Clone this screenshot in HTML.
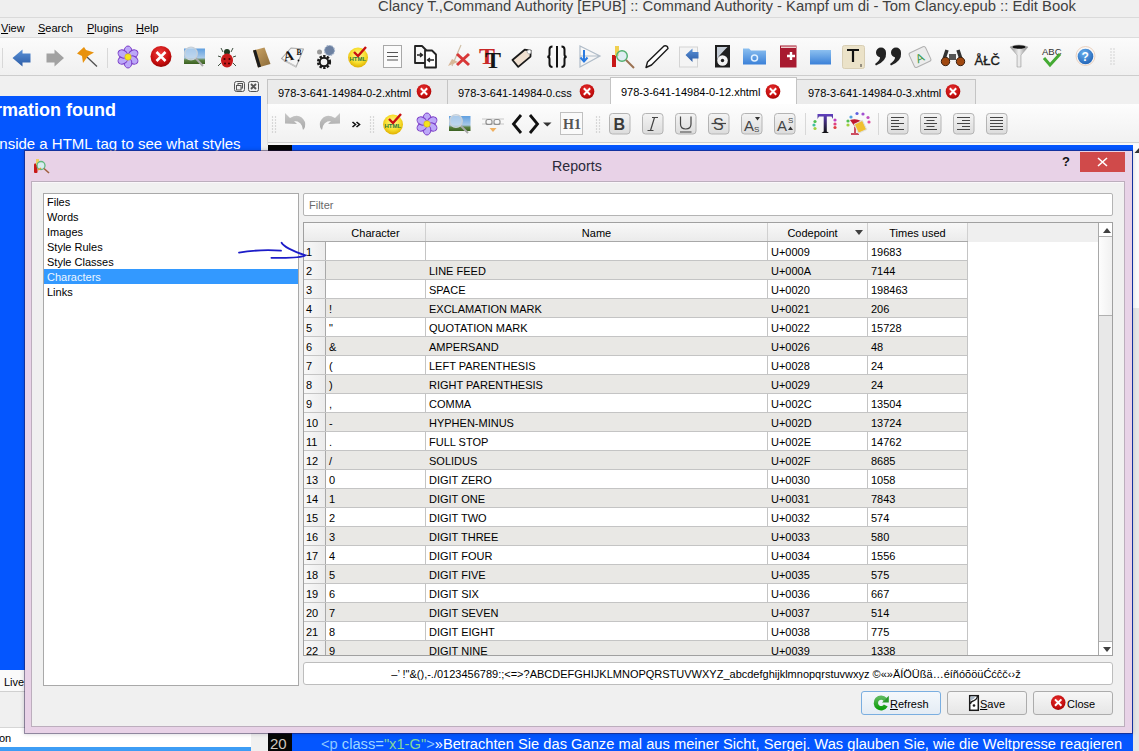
<!DOCTYPE html><html><head><meta charset="utf-8"><style>*{box-sizing:border-box;margin:0;padding:0}
html,body{width:1139px;height:751px;overflow:hidden;background:#f0f0f0;font-family:"Liberation Sans",sans-serif;color:#000;font-size:11px}
body{position:relative}
.a{position:absolute}
.t{position:absolute;white-space:nowrap}
#title{left:0;top:0;width:1139px;height:18px;background:#efefef;border-bottom:1px solid #dadada}
#menu{left:0;top:18px;width:1139px;height:20px;background:#f0f0f0;border-bottom:1px solid #dcdcdc}
#menu span{position:absolute;top:3px;font-size:11px;line-height:14px}
#tb{left:0;top:38px;width:1139px;height:38px;background:linear-gradient(#fbfbfb,#f0f0f0);border-bottom:1px solid #cdcdcd}
#leftpanel{left:0;top:96px;width:261px;height:574px;background:#0456ff;overflow:hidden}
#editor{left:268px;top:145px;width:865px;height:606px;background:#0456ff;overflow:hidden}
#gutter{left:0;top:0;width:24px;height:607px;background:#060606}
.tab{position:absolute;top:79px;height:25px;background:#ebebeb;border:1px solid #c4c4c4;border-bottom:none;font-size:11px}
.tab .t{top:6px}
/* dialog */
#dlg{left:24px;top:150px;width:1109px;height:584px;background:#e8d2e7;background-clip:padding-box;border:1px solid rgba(40,20,70,0.45);box-shadow:0 0 4px rgba(0,0,30,0.18)}
#dtitle{left:25px;top:151px;width:1107px;height:30px;background:#e8d2e7}
#dtxt{left:552px;top:156px;font-size:15.3px;line-height:20px;color:#2a2a3a;transform:scaleX(0.93);transform-origin:0 0}
#qm{left:1062px;top:153px;font-size:13px;font-weight:bold;line-height:18px;color:#111}
#dclose{left:1080px;top:152px;width:45px;height:20px;background:#d04a4a}
#inner{left:31px;top:181px;width:1094px;height:546px;background:#f0f0f0;border:1px solid #bcaebd;box-shadow:inset 0 1px #faf6fa}
#list{left:43px;top:193px;width:256px;height:493px;background:#fff;border:1px solid #a9a9a9}
.li{position:absolute;left:0;width:254px;height:15px;line-height:15px}
.li span{position:absolute;left:3px;top:1px}
.li.sel{background:#3399ff;color:#eef7ff}
#filter{left:303px;top:193px;width:810px;height:23px;background:#fff;border:1px solid #b4b4b4;border-radius:2px}
#filter .t{left:5px;top:4px;color:#6a6a6a;line-height:14px}
#tbl{left:303px;top:222px;width:810px;height:434px;background:#fff;border:1px solid #a0a0a0;overflow:hidden}
#hdr{left:0;top:0;width:664px;height:19px;background:linear-gradient(#f8f8f8,#ebebeb);border-bottom:1px solid #a8a8a8}
#hdr2{left:664px;top:0;width:130px;height:19px;background:#efefef}
.hc{top:0;height:18px;border-right:1px solid #d0d0d0;text-align:center;line-height:18px}
.hc:first-of-type{border-right:1px solid #d0d0d0}
.hc span{position:relative;top:1px}
.row{left:0;width:664px;height:19px;background:#fff;border-bottom:1px solid #c4c4c4;border-right:1px solid #c4c4c4}
.row.alt{background:#e9e8e5}
.vh{left:0;top:0;width:22px;height:18px;background:linear-gradient(90deg,#f8f8f8,#ececec);border-right:1px solid #a8a8a8}
.vh span{position:absolute;left:2px;top:3px;line-height:14px}
.row .t{top:3px;line-height:14px}
.c1{left:25px}.c2{left:125px}.c3{left:467px}.c4{left:567px}
.row{background-image:linear-gradient(90deg,transparent 121px,#c4c4c4 121px,#c4c4c4 122px,transparent 122px,transparent 463px,#c4c4c4 463px,#c4c4c4 464px,transparent 464px,transparent 563px,#c4c4c4 563px,#c4c4c4 564px,transparent 564px)}
#vsb{left:794px;top:0;width:15px;height:432px;background:#e8e8e8;border-left:1px solid #a8a8a8}
#sbup{left:0;top:0;width:14px;height:14px;background:#fff;border-bottom:1px solid #b0b0b0}
#sbhandle{left:0;top:14px;width:14px;height:79px;background:linear-gradient(90deg,#fdfdfd,#f0f0f0);border-bottom:1px solid #b0b0b0}
#sbdn{left:0;top:418px;width:14px;height:14px;background:#fff;border-top:1px solid #b0b0b0}
#chars{left:303px;top:662px;width:810px;height:23px;background:#fff;border:1px solid #bdbdbd;border-radius:3px;text-align:center}
#chars .t{position:relative;top:4px;left:-2px;line-height:14px}
.btn{position:absolute;top:691px;width:80px;height:24px;border:1px solid #acacac;border-radius:3px;background:linear-gradient(#f7f7f7,#e6e6e6)}
.btn .t{top:5px;line-height:14px}
</style></head><body>
<div id="title" class="a"><span class="t" style="left:378px;top:-3px;font-size:14.85px;line-height:18px;color:#3f3f3f">Clancy T.,Command Authority [EPUB] :: Command Authority - Kampf um di - Tom Clancy.epub :: Edit Book</span></div>
<div id="menu" class="a">
<span style="left:1px"><u>V</u>iew</span>
<span style="left:38px"><u>S</u>earch</span>
<span style="left:87px"><u>P</u>lugins</span>
<span style="left:136px"><u>H</u>elp</span>
</div>
<div id="tb" class="a"></div>
<svg class="a" style="left:233px;top:80px" width="28" height="14" viewBox="233 80 28 14">
<rect x="234.5" y="81.5" width="10" height="10" rx="2" fill="none" stroke="#555"/>
<rect x="238" y="83.5" width="4.5" height="4.5" fill="none" stroke="#555"/>
<rect x="236.5" y="85.5" width="4.5" height="4.5" fill="#f0f0f0" stroke="#555"/>
<rect x="248.5" y="81.5" width="10" height="10" rx="2" fill="none" stroke="#555"/>
<path d="M251 84 L256 89 M256 84 L251 89" stroke="#555" stroke-width="1.8"/>
</svg>
<div id="leftpanel" class="a">
<span class="t" style="left:-5px;top:5px;font-size:18px;line-height:18px;font-weight:bold;color:#fff">rmation found</span>
<span class="t" style="left:-4px;top:39px;font-size:15px;line-height:18px;color:#fff">inside a HTML tag to see what styles</span>
</div>
<div class="a" style="left:0;top:670px;width:261px;height:22px;background:#fafafa;border-bottom:1px solid #d0d0d0"></div>
<span class="t" style="left:4px;top:675px;line-height:14px">Live</span>
<div class="a" style="left:0;top:727px;width:251px;height:24px;background:#fff;border-top:1px solid #d6d6d6"></div>
<span class="t" style="left:-1px;top:731px;line-height:14px">on</span>
<div class="a" style="left:0;top:747px;width:251px;height:4px;background:#3d9df5"></div>
<div class="tab" style="left:267px;width:181px"><span class="t" style="left:10px;top:7px">978-3-641-14984-0-2.xhtml</span></div>
<div class="tab" style="left:447px;width:164px"><span class="t" style="left:10px;top:7px">978-3-641-14984-0.css</span></div>
<div class="tab" style="left:610px;top:77px;height:27px;width:187px;background:#fff"><span class="t" style="left:10px;top:8px">978-3-641-14984-0-12.xhtml</span></div>
<div class="tab" style="left:796px;width:180px"><span class="t" style="left:11px;top:7px">978-3-641-14984-0-3.xhtml</span></div>
<svg class="a" style="left:260px;top:78px" width="740" height="28" viewBox="260 78 740 28">
<defs><radialGradient id="gRedT" cx="0.45" cy="0.35" r="0.7"><stop offset="0" stop-color="#e83030"/><stop offset="0.75" stop-color="#c00c0c"/><stop offset="1" stop-color="#900000"/></radialGradient></defs>
<g id="tcx"><circle cx="424" cy="91.5" r="7.3" fill="url(#gRedT)"/><path d="M420.8 88.3 L427.2 94.7 M427.2 88.3 L420.8 94.7" stroke="#fff" stroke-width="2"/></g>
<use href="#tcx" x="163" y="0"/>
<use href="#tcx" x="349" y="0"/>
<use href="#tcx" x="529" y="0"/>
</svg>
<div id="edtb" class="a" style="left:267px;top:104px;width:872px;height:41px;background:linear-gradient(#fdfdfd,#f0f0f0);border-left:1px solid #e0e0e0;box-shadow:inset 0 -2px #f8f8f8, inset 0 -3px #d0d0d0"></div>
<div id="editor" class="a">
<div id="gutter" class="a"><span class="t" style="left:2px;top:590px;font-size:15px;line-height:17px;color:#d0c8c0">20</span></div>
<span class="t" style="left:53px;top:591px;font-size:14.7px;line-height:17px;color:#fff"><span style="color:#8ec8ff">&lt;p </span><span style="color:#9fd6ff">class=</span><span style="color:#86d69a">"x1-G"</span><span style="color:#8ec8ff">&gt;</span>»Betrachten Sie das Ganze mal aus meiner Sicht, Sergej. Was glauben Sie, wie die Weltpresse reagieren</span>
</div>
<div class="a" style="left:1133px;top:144px;width:6px;height:607px;background:linear-gradient(#fbfbfb 164px,#e6e6e6 164px)"></div><svg class="a" style="left:1133px;top:144px" width="6" height="14"><path d="M1.5 9 L6 4 L10.5 9Z" fill="#333"/></svg>

<svg class="a" style="left:0;top:38px" width="1139" height="38" viewBox="0 38 1139 38">
<defs>
<linearGradient id="gBlue" x1="0" y1="0" x2="0" y2="1"><stop offset="0" stop-color="#5b92d8"/><stop offset="1" stop-color="#2b5ba5"/></linearGradient>
<radialGradient id="gRed" cx="0.45" cy="0.35" r="0.7"><stop offset="0" stop-color="#f04040"/><stop offset="0.7" stop-color="#c40c0c"/><stop offset="1" stop-color="#8a0000"/></radialGradient>
<linearGradient id="gSky" x1="0" y1="0" x2="0" y2="1"><stop offset="0" stop-color="#5f9fe0"/><stop offset="0.6" stop-color="#a8c8e8"/><stop offset="0.75" stop-color="#5a8040"/><stop offset="1" stop-color="#3a6020"/></linearGradient>
<radialGradient id="gYel" cx="0.5" cy="0.4" r="0.6"><stop offset="0" stop-color="#fff8a0"/><stop offset="0.6" stop-color="#f8e030"/><stop offset="1" stop-color="#e0b000"/></radialGradient>
<radialGradient id="gHelp" cx="0.4" cy="0.3" r="0.8"><stop offset="0" stop-color="#6ab0f0"/><stop offset="1" stop-color="#1a5cb0"/></radialGradient>
<linearGradient id="gFold" x1="0" y1="0" x2="0" y2="1"><stop offset="0" stop-color="#8cc0f0"/><stop offset="1" stop-color="#3a80d8"/></linearGradient>
<linearGradient id="gBook" x1="0" y1="0" x2="1" y2="1"><stop offset="0" stop-color="#d0a868"/><stop offset="1" stop-color="#8a6a38"/></linearGradient>
<linearGradient id="gFun" x1="0" y1="0" x2="1" y2="0"><stop offset="0" stop-color="#909090"/><stop offset="0.5" stop-color="#f0f0f0"/><stop offset="1" stop-color="#808080"/></linearGradient>
</defs>
<line x1="2.5" y1="48" x2="2.5" y2="68" stroke="#d8d8d8"/>
<polygon points="12.5,58 22.5,49.5 22.5,53.5 30.5,53.5 30.5,62.5 22.5,62.5 22.5,66.5" fill="url(#gBlue)"/>
<polygon points="64,58 54.5,49.5 54.5,53.5 46.5,53.5 46.5,62.5 54.5,62.5 54.5,66.5" fill="#a2a2a2"/>
<line x1="87" y1="57" x2="97" y2="66.5" stroke="#505050" stroke-width="1.3"/>
<polygon points="77,53.5 84,47 86,50 94,52.5 88,56 83,63 82,56" fill="#e8920e"/>
<line x1="107.5" y1="48" x2="107.5" y2="68" stroke="#d8d8d8"/>
<g transform="translate(128,57)" fill="#bca8f8" stroke="#7a3cc8" stroke-width="1">
<ellipse cx="0" cy="-6" rx="3.8" ry="5"/><ellipse cx="0" cy="-6" rx="3.8" ry="5" transform="rotate(60)"/><ellipse cx="0" cy="-6" rx="3.8" ry="5" transform="rotate(120)"/><ellipse cx="0" cy="-6" rx="3.8" ry="5" transform="rotate(180)"/><ellipse cx="0" cy="-6" rx="3.8" ry="5" transform="rotate(240)"/><ellipse cx="0" cy="-6" rx="3.8" ry="5" transform="rotate(300)"/>
<circle r="3.2" fill="#f4e41c" stroke="#c8b020" stroke-width="0.6"/></g>
<circle cx="161" cy="56.5" r="10.5" fill="url(#gRed)"/>
<path d="M156.5 52 L165.5 61 M165.5 52 L156.5 61" stroke="#fff" stroke-width="2.6"/>
<rect x="184" y="48.5" width="21" height="15.5" fill="url(#gSky)"/>
<line x1="195.5" y1="58" x2="203" y2="66" stroke="#a8a8a8" stroke-width="2"/>
<circle cx="191" cy="53.5" r="6.3" fill="#c8dcf0" fill-opacity="0.7" stroke="#c8d0d8" stroke-width="1.3"/>
<g transform="translate(227,59)">
<path d="M-4-7 L-6-11 M4-7 L6-11 M-6-2 L-9-3 M6-2 L9-3 M-6 4 L-9 7 M6 4 L9 7" stroke="#405040" stroke-width="1"/>
<circle cx="0" cy="-7" r="3" fill="#1e3a20"/>
<ellipse cx="0" cy="1.5" rx="6" ry="7" fill="#c81a1a"/>
<circle cx="-2.5" cy="0" r="1.1" fill="#400"/><circle cx="2.5" cy="0" r="1.1" fill="#400"/><circle cx="-2" cy="4.5" r="1" fill="#400"/><circle cx="2" cy="4.5" r="1" fill="#400"/>
</g>
<polygon points="253,50.5 264.5,47.5 270.5,64 258,67.5" fill="url(#gBook)"/>
<polygon points="253,50.5 256,49.7 261,66.7 258,67.5" fill="#1c1c1c"/>
<polygon points="281.5,58.5 291,48 303.5,49 296,67" fill="#f6f6f6" stroke="#a8a8a8" stroke-width="1.1" stroke-linejoin="round"/>
<path d="M283 60 L296 66.5" stroke="#c8c8c8" stroke-width="1.5"/>
<text transform="translate(284.5,61.5) rotate(-12)" font-family="Liberation Serif" font-weight="bold" font-size="14" fill="#111">A</text>
<text x="296.5" y="54.5" font-family="Liberation Serif" font-weight="bold" font-size="7.5" fill="#111">B</text>
<circle cx="298.5" cy="60.5" r="0.9" fill="#111"/>
<g transform="translate(324,62)"><circle r="5.5" fill="none" stroke="#1a1a1a" stroke-width="3.2" stroke-dasharray="2.2 1.3"/><circle r="4.3" fill="none" stroke="#1a1a1a" stroke-width="2"/></g>
<circle cx="329.5" cy="50.5" r="5" fill="#6c80a0" stroke="#a0b0c8" stroke-width="1.2" stroke-dasharray="1.5 1"/>
<circle cx="319.5" cy="52" r="2.5" fill="#9a9a9a"/>
<circle cx="358" cy="57.5" r="10" fill="url(#gYel)"/>
<text x="349.5" y="61" font-family="Liberation Sans" font-weight="bold" font-size="6" fill="#2a7a3a">HTML</text>
<path d="M354 52 L358 56 L366 47" stroke="#c81010" stroke-width="2.4" fill="none"/>
<rect x="383.5" y="45.5" width="18" height="22" fill="#fbfbfb" stroke="#a8a8a8"/>
<path d="M387 52.5 H398 M387 56.5 H398 M387 60 H398" stroke="#555" stroke-width="1"/>
<path d="M415 46 H422 L426 50 V63 H415 Z" fill="none" stroke="#222" stroke-width="1.8" stroke-linejoin="round"/>
<path d="M425 50.5 H432 L436 54.5 V67.5 H425 Z" fill="#fff" stroke="#222" stroke-width="1.8" stroke-linejoin="round"/>
<path d="M417 55 H422 M420 53 L422.5 55 L420 57 M434 60 H428 M430 58 L427.5 60 L430 62" stroke="#222" stroke-width="1.3" fill="none"/>
<path d="M461 45 L452 66" stroke="#d0c0a8" stroke-width="1.2"/>
<path d="M448 66 L452 59 L458 62 Z" fill="#d8b898"/>
<path d="M457 54 L469 65 M469 54 L457 65" stroke="#d83838" stroke-width="3"/>
<text x="479" y="64" font-family="Liberation Serif" font-weight="bold" font-size="24" fill="#c82828">T</text>
<text x="485" y="67.5" font-family="Liberation Serif" font-weight="bold" font-size="24" fill="#151515">T</text>
<g transform="translate(523,57) rotate(-40)">
<path d="M-10 -4.5 H6 L10 0 L6 4.5 H-10 Z" fill="#f0e0d0" stroke="#1a1a1a" stroke-width="1.8" stroke-linejoin="round"/>
<circle cx="8" cy="0" r="2" fill="#fff" stroke="#aaa" stroke-width="0.8"/></g>
<path d="M552.5 46.5 Q549.5 46.5 549.5 49.5 V54.5 Q549.5 56.5 547.5 56.8 Q549.5 57.2 549.5 59 V64 Q549.5 67 552.5 67 M557 46 V67.5 M561.5 46.5 Q564.5 46.5 564.5 49.5 V54.5 Q564.5 56.5 566.5 56.8 Q564.5 57.2 564.5 59 V64 Q564.5 67 561.5 67" fill="none" stroke="#111" stroke-width="2"/>
<path d="M580 46 L600 56 L580 67 Z M580 56 H599" fill="none" stroke="#b0bcc8" stroke-width="1.2"/>
<path d="M584 50 V61 M580.5 57.5 L584 61.5 L587.5 57.5" fill="none" stroke="#2a7ae0" stroke-width="2"/>
<rect x="612" y="55" width="4" height="12" fill="#c81818"/>
<rect x="615" y="46" width="4" height="10" fill="#f0d050"/>
<circle cx="622" cy="56" r="5.3" fill="#d0e8f0" fill-opacity="0.6" stroke="#50b070" stroke-width="1.4"/>
<path d="M626 60 L634 68" stroke="#9a7050" stroke-width="2"/>
<path d="M646 67.5 L647.5 62 L664 46 Q667.5 45 668 48.5 L651.5 65 Z" fill="#fff" stroke="#1a1a1a" stroke-width="1.4" stroke-linejoin="round"/>
<rect x="679.5" y="47" width="18" height="20" fill="#f4f4f4" stroke="#d4d4d4"/>
<polygon points="685.5,55 692.5,48.5 692.5,52 698.5,52 698.5,58.5 692.5,58.5 692.5,62" fill="url(#gBlue)"/>
<rect x="715" y="45" width="15" height="22.5" fill="#1e1e1e"/>
<path d="M717 47 H727.5 Q723 51.5 719.5 55.5 Q717.5 57.5 717 60 Z" fill="#c4ccd6"/>
<circle cx="722.5" cy="60.5" r="5.3" fill="#f2f2f2"/>
<circle cx="722.5" cy="60.5" r="1.7" fill="#1e1e1e"/>
<path d="M743 48.5 H749 L751 50.5 H766 V64.5 H743 Z" fill="url(#gFold)"/>
<circle cx="754.5" cy="58" r="3" fill="none" stroke="#e0f0ff" stroke-width="1.5"/>
<rect x="780" y="45.5" width="16.5" height="22" fill="#a81a30"/>
<rect x="781" y="46.5" width="15" height="1.5" fill="#f0d0d0"/>
<path d="M791 52 V60 M787 56 H795" stroke="#fff" stroke-width="2.4"/>
<path d="M810 50 H831 V64.5 H810 Z" fill="url(#gFold)"/>
<rect x="842.5" y="45.5" width="22" height="23" rx="2" fill="#ebe2c8" stroke="#d8ceb4"/>
<path d="M847 50 H859 M853 50 V62" stroke="#111" stroke-width="2.2"/>
<path d="M861 64 V67" stroke="#111" stroke-width="0.8"/>
<circle cx="881" cy="52.5" r="5" fill="#222"/><path d="M886 52.5 Q887 61 876 65.5 L875 64 Q880.5 60 880 57 Z" fill="#222"/>
<circle cx="896" cy="52.5" r="5" fill="#222"/><path d="M901 52.5 Q902 61 891 65.5 L890 64 Q895.5 60 895 57 Z" fill="#222"/>
<g transform="translate(920,57) rotate(-25)"><rect x="-9" y="-8" width="18" height="16" rx="2" fill="#ececec" stroke="#b0b0b0"/><text x="-4.5" y="5" font-family="Liberation Sans" font-size="12" fill="#3a9a4a">A</text></g>
<path d="M947 50 L944 59 M958 50 L961 59" stroke="#333" stroke-width="3.5"/>
<rect x="949" y="54" width="7" height="6" fill="#555"/>
<circle cx="945.5" cy="61.5" r="4.2" fill="#a04810" stroke="#3a2010" stroke-width="1"/>
<circle cx="960.5" cy="61.5" r="4.2" fill="#a04810" stroke="#3a2010" stroke-width="1"/>
<text x="974.5" y="64.5" font-family="Liberation Sans" font-size="13" fill="#1a1a1a" stroke="#1a1a1a" stroke-width="0.35">ÅŁČ</text>
<path d="M1010 47 Q1019 43 1028 47 L1021 55 V67 H1017 V55 Z" fill="url(#gFun)" stroke="#a0a0a0" stroke-width="0.6"/>
<ellipse cx="1019" cy="47" rx="6.5" ry="1.8" fill="#111"/>
<text x="1042" y="55" font-family="Liberation Sans" font-size="9.5" fill="#303030">ABC</text>
<path d="M1044 58 L1050 65 L1060 54" stroke="#44aa33" stroke-width="3" fill="none"/>
<circle cx="1085.5" cy="56" r="9.5" fill="none" stroke="#e8c8b0" stroke-width="0.8"/>
<circle cx="1085.5" cy="56.5" r="7.8" fill="url(#gHelp)"/>
<text x="1081.5" y="61" font-family="Liberation Sans" font-weight="bold" font-size="12" fill="#fff">?</text>
<g fill="#c8c8c8"><circle cx="1111" cy="49" r="0.7"/><circle cx="1114" cy="49" r="0.7"/><circle cx="1111" cy="52" r="0.7"/><circle cx="1114" cy="52" r="0.7"/><circle cx="1111" cy="55" r="0.7"/><circle cx="1114" cy="55" r="0.7"/><circle cx="1111" cy="58" r="0.7"/><circle cx="1114" cy="58" r="0.7"/><circle cx="1111" cy="61" r="0.7"/><circle cx="1114" cy="61" r="0.7"/><circle cx="1111" cy="64" r="0.7"/><circle cx="1114" cy="64" r="0.7"/></g>
</svg>

<svg class="a" style="left:261px;top:104px" width="878" height="41" viewBox="261 104 878 41">
<defs>
<linearGradient id="gBtn" x1="0" y1="0" x2="0" y2="1"><stop offset="0" stop-color="#f4f4f4"/><stop offset="1" stop-color="#dcdcdc"/></linearGradient>
<linearGradient id="gUndo" x1="0" y1="0" x2="0" y2="1"><stop offset="0" stop-color="#c8c8c8"/><stop offset="1" stop-color="#a8a8a8"/></linearGradient>
<radialGradient id="gYel2" cx="0.5" cy="0.4" r="0.6"><stop offset="0" stop-color="#fff8a0"/><stop offset="0.6" stop-color="#f8e030"/><stop offset="1" stop-color="#e0b000"/></radialGradient>
<linearGradient id="gSky2" x1="0" y1="0" x2="0" y2="1"><stop offset="0" stop-color="#5f9fe0"/><stop offset="0.6" stop-color="#a8c8e8"/><stop offset="0.75" stop-color="#5a8040"/><stop offset="1" stop-color="#3a6020"/></linearGradient>
<linearGradient id="gTcol" x1="0" y1="0" x2="0" y2="1"><stop offset="0" stop-color="#6040c0"/><stop offset="1" stop-color="#101010"/></linearGradient>
</defs>
<g fill="#c4c4c4"><circle cx="272.5" cy="117" r="0.7"/><circle cx="275.5" cy="117" r="0.7"/><circle cx="272.5" cy="120" r="0.7"/><circle cx="275.5" cy="120" r="0.7"/><circle cx="272.5" cy="123" r="0.7"/><circle cx="275.5" cy="123" r="0.7"/><circle cx="272.5" cy="126" r="0.7"/><circle cx="275.5" cy="126" r="0.7"/><circle cx="272.5" cy="129" r="0.7"/><circle cx="275.5" cy="129" r="0.7"/><circle cx="272.5" cy="132" r="0.7"/><circle cx="275.5" cy="132" r="0.7"/></g>
<path d="M285 123.5 L285 113 L290 118 Q300 112 305 122 Q306 127 303 130 Q302 121 294 121 L297 124 Z" fill="url(#gUndo)"/>
<path d="M340 123.5 L340 113 L335 118 Q325 112 320 122 Q319 127 322 130 Q323 121 331 121 L328 124 Z" fill="url(#gUndo)"/>
<path d="M352.5 122 L355.5 124.5 L352.5 127 M356.5 122 L359.5 124.5 L356.5 127" fill="none" stroke="#111" stroke-width="1.6"/>
<g fill="#c4c4c4"><circle cx="370.5" cy="117" r="0.7"/><circle cx="373.5" cy="117" r="0.7"/><circle cx="370.5" cy="120" r="0.7"/><circle cx="373.5" cy="120" r="0.7"/><circle cx="370.5" cy="123" r="0.7"/><circle cx="373.5" cy="123" r="0.7"/><circle cx="370.5" cy="126" r="0.7"/><circle cx="373.5" cy="126" r="0.7"/><circle cx="370.5" cy="129" r="0.7"/><circle cx="373.5" cy="129" r="0.7"/><circle cx="370.5" cy="132" r="0.7"/><circle cx="373.5" cy="132" r="0.7"/></g>
<circle cx="393" cy="124.5" r="10" fill="url(#gYel2)"/>
<text x="384.5" y="128" font-family="Liberation Sans" font-weight="bold" font-size="6" fill="#2a7a3a">HTML</text>
<path d="M389 119 L393 123 L401 114" stroke="#c81010" stroke-width="2.4" fill="none"/>
<g transform="translate(427,124)" fill="#bca8f8" stroke="#7a3cc8" stroke-width="1">
<ellipse cx="0" cy="-6" rx="3.8" ry="5"/><ellipse cx="0" cy="-6" rx="3.8" ry="5" transform="rotate(60)"/><ellipse cx="0" cy="-6" rx="3.8" ry="5" transform="rotate(120)"/><ellipse cx="0" cy="-6" rx="3.8" ry="5" transform="rotate(180)"/><ellipse cx="0" cy="-6" rx="3.8" ry="5" transform="rotate(240)"/><ellipse cx="0" cy="-6" rx="3.8" ry="5" transform="rotate(300)"/>
<circle r="3.2" fill="#f4e41c" stroke="#c8b020" stroke-width="0.6"/></g>
<rect x="449" y="116" width="21.5" height="15" fill="url(#gSky2)"/>
<line x1="460" y1="125" x2="468" y2="133" stroke="#a8a8a8" stroke-width="2"/>
<circle cx="456" cy="121" r="6.3" fill="#c8dcf0" fill-opacity="0.7" stroke="#c8d0d8" stroke-width="1.3"/>
<path d="M482 119 H504 M482 124 H504" stroke="#c8c8c8" stroke-width="1"/>
<rect x="486" y="119.5" width="6" height="5" rx="2" fill="none" stroke="#909090" stroke-width="1.2"/>
<rect x="494" y="119.5" width="6" height="5" rx="2" fill="none" stroke="#909090" stroke-width="1.2"/>
<path d="M489.5 128 H496.5 L493 132 Z" fill="#f0b060"/>
<path d="M521 115 L513.5 124 L521 133 M530 115 L537.5 124 L530 133" fill="none" stroke="#111" stroke-width="2.8"/>
<path d="M543 122.5 H551.5 L547.25 126.5 Z" fill="#333"/>
<rect x="560.5" y="112.5" width="22" height="22" fill="#fafafa" stroke="#c0c0c0"/>
<text x="563" y="129" font-family="Liberation Serif" font-weight="bold" font-size="14" fill="#555">H1</text>
<g fill="#c4c4c4"><circle cx="596.5" cy="117" r="0.7"/><circle cx="599.5" cy="117" r="0.7"/><circle cx="596.5" cy="120" r="0.7"/><circle cx="599.5" cy="120" r="0.7"/><circle cx="596.5" cy="123" r="0.7"/><circle cx="599.5" cy="123" r="0.7"/><circle cx="596.5" cy="126" r="0.7"/><circle cx="599.5" cy="126" r="0.7"/><circle cx="596.5" cy="129" r="0.7"/><circle cx="599.5" cy="129" r="0.7"/><circle cx="596.5" cy="132" r="0.7"/><circle cx="599.5" cy="132" r="0.7"/></g>
<g stroke="#b4b4b4" fill="url(#gBtn)">
<rect x="609.5" y="113.5" width="20.5" height="20.5" rx="3"/>
<rect x="642.5" y="113.5" width="20.5" height="20.5" rx="3"/>
<rect x="675.5" y="113.5" width="20.5" height="20.5" rx="3"/>
<rect x="708.5" y="113.5" width="20.5" height="20.5" rx="3"/>
<rect x="741.5" y="113.5" width="20.5" height="20.5" rx="3"/>
<rect x="774.5" y="113.5" width="20.5" height="20.5" rx="3"/>
<rect x="887.5" y="113.5" width="20.5" height="20.5" rx="3"/>
<rect x="920.5" y="113.5" width="20.5" height="20.5" rx="3"/>
<rect x="953.5" y="113.5" width="20.5" height="20.5" rx="3"/>
<rect x="986.5" y="113.5" width="20.5" height="20.5" rx="3"/>
</g>
<text x="613.5" y="130" font-family="Liberation Sans" font-weight="bold" font-size="16" fill="#3a3a3a">B</text>
<path d="M654.5 117.5 L650.5 130.5 M652 117.5 H658 M647.5 130.5 H653.5" stroke="#444" stroke-width="1.2" fill="none"/>
<path d="M680.5 116.5 V124 Q680.5 129 685.75 129 Q691 129 691 124 V116.5 M680 132 H691.5" stroke="#444" stroke-width="1.2" fill="none"/>
<text x="713" y="130" font-family="Liberation Sans" font-size="16" fill="#444">S</text>
<path d="M711.5 123.5 H726" stroke="#444" stroke-width="1.2"/>
<text x="744" y="131" font-family="Liberation Sans" font-size="15" fill="#444">A</text>
<text x="754" y="132" font-family="Liberation Sans" font-size="8" fill="#444">S</text>
<path d="M755 117 H760 L757.5 120.5 Z" fill="#333"/>
<text x="777" y="131" font-family="Liberation Sans" font-size="15" fill="#444">A</text>
<text x="788" y="123" font-family="Liberation Sans" font-size="8" fill="#444">S</text>
<path d="M788 130 H793 L790.5 126.5 Z" fill="#333"/>
<line x1="805.5" y1="113" x2="805.5" y2="135" stroke="#d8d8d8"/>
<path d="M817.5 114 H833 V119 L831.5 116.5 H826.8 V131.5 L829 133 H821.5 L823.7 131.5 V116.5 H819 L817.5 119 Z" fill="url(#gTcol)"/>
<g><circle cx="815" cy="121.5" r="1.6" fill="#50c050"/><circle cx="814" cy="125" r="1.6" fill="#40c0a0"/><circle cx="815" cy="128.5" r="1.6" fill="#a0d040"/><circle cx="835" cy="120" r="1.6" fill="#c040c0"/><circle cx="835" cy="124" r="1.6" fill="#e04080"/><circle cx="835" cy="127.5" r="1.6" fill="#e04040"/></g>
<g><circle cx="851" cy="117" r="1.6" fill="#50a0e0"/><circle cx="857" cy="113.5" r="1.6" fill="#6060e0"/><circle cx="863" cy="114" r="1.6" fill="#a050d0"/><circle cx="868" cy="117.5" r="1.6" fill="#c050c0"/><circle cx="869" cy="122" r="1.6" fill="#e050a0"/><circle cx="848" cy="121" r="1.6" fill="#50c050"/><circle cx="848" cy="125" r="1.6" fill="#a0d040"/></g>
<path d="M850 120 Q856 118 861 121 L855 127 Z" fill="#c01830"/>
<path d="M855 127 V133 M851 134 H859" stroke="#c01830" stroke-width="1.5"/>
<rect x="856" y="122" width="9" height="10" transform="rotate(-25 860 127)" fill="#f0c030" stroke="#e0e0e0"/>
<line x1="878.5" y1="113" x2="878.5" y2="135" stroke="#d8d8d8"/>
<g stroke="#444" stroke-width="1.2">
<path d="M891 117.5 H904 M891 120.5 H899 M891 123.5 H904 M891 126.5 H899 M891 129.5 H904"/>
<path d="M924 117.5 H937 M926.5 120.5 H934.5 M924 123.5 H937 M926.5 126.5 H934.5 M924 129.5 H937"/>
<path d="M957 117.5 H970 M962 120.5 H970 M957 123.5 H970 M962 126.5 H970 M957 129.5 H970"/>
<path d="M990 117.5 H1003 M990 120.5 H1003 M990 123.5 H1003 M990 126.5 H1003 M990 129.5 H1003"/>
</g>
</svg>

<div class="a" id="dlg"></div>
<div class="a" id="dtitle"></div>
<span class="t" id="dtxt">Reports</span>
<span class="t" id="qm">?</span>
<div class="a" id="dclose"><svg width="45" height="20" viewBox="0 0 45 20"><path d="M18 6 L27 14 M27 6 L18 14" stroke="#fff" stroke-width="1.6" fill="none"/></svg></div>
<svg class="a" style="left:32px;top:157px" width="20" height="20" viewBox="32 157 20 20"><rect x="34" y="163.5" width="3.5" height="9.5" rx="1" fill="#c81818"/><rect x="36" y="159" width="3" height="6" fill="#f0d060"/><circle cx="41" cy="165.5" r="4" fill="#d8ecf0" stroke="#60b880" stroke-width="1.3"/><path d="M38 170 L41 168" stroke="#e0a030" stroke-width="1.5"/><path d="M44 168.5 L49 173" stroke="#a06040" stroke-width="1.6"/></svg>

<div class="a" id="inner"></div>
<div class="a" id="list">
<div class="li" style="top:0px"><span>Files</span></div>
<div class="li" style="top:15px"><span>Words</span></div>
<div class="li" style="top:30px"><span>Images</span></div>
<div class="li" style="top:45px"><span>Style Rules</span></div>
<div class="li" style="top:60px"><span>Style Classes</span></div>
<div class="li sel" style="top:75px"><span>Characters</span></div>
<div class="li" style="top:90px"><span>Links</span></div>
</div>
<div class="a" id="filter"><span class="t">Filter</span></div>
<div class="a" id="tbl">
<div class="a" id="hdr"></div><div class="a" id="hdr2"></div>
<div class="a hc" style="left:22px;width:100px"><span>Character</span></div>
<div class="a hc" style="left:122px;width:342px"><span>Name</span></div>
<div class="a hc" style="left:464px;width:100px"><span style="left:-5px">Codepoint</span></div>
<div class="a hc" style="left:564px;width:100px"><span>Times used</span></div>
<svg class="a" style="left:551px;top:7px" width="9" height="6"><path d="M0 0 L8 0 L4 5 Z" fill="#404040"/></svg>
<div class="a row" style="top:19px">
<div class="a vh"><span>1</span></div>
<span class="t c1"></span><span class="t c2"></span><span class="t c3">U+0009</span><span class="t c4">19683</span>
</div>
<div class="a row alt" style="top:38px">
<div class="a vh"><span>2</span></div>
<span class="t c1"></span><span class="t c2">LINE FEED</span><span class="t c3">U+000A</span><span class="t c4">7144</span>
</div>
<div class="a row" style="top:57px">
<div class="a vh"><span>3</span></div>
<span class="t c1"></span><span class="t c2">SPACE</span><span class="t c3">U+0020</span><span class="t c4">198463</span>
</div>
<div class="a row alt" style="top:76px">
<div class="a vh"><span>4</span></div>
<span class="t c1">!</span><span class="t c2">EXCLAMATION MARK</span><span class="t c3">U+0021</span><span class="t c4">206</span>
</div>
<div class="a row" style="top:95px">
<div class="a vh"><span>5</span></div>
<span class="t c1">&quot;</span><span class="t c2">QUOTATION MARK</span><span class="t c3">U+0022</span><span class="t c4">15728</span>
</div>
<div class="a row alt" style="top:114px">
<div class="a vh"><span>6</span></div>
<span class="t c1">&amp;</span><span class="t c2">AMPERSAND</span><span class="t c3">U+0026</span><span class="t c4">48</span>
</div>
<div class="a row" style="top:133px">
<div class="a vh"><span>7</span></div>
<span class="t c1">(</span><span class="t c2">LEFT PARENTHESIS</span><span class="t c3">U+0028</span><span class="t c4">24</span>
</div>
<div class="a row alt" style="top:152px">
<div class="a vh"><span>8</span></div>
<span class="t c1">)</span><span class="t c2">RIGHT PARENTHESIS</span><span class="t c3">U+0029</span><span class="t c4">24</span>
</div>
<div class="a row" style="top:171px">
<div class="a vh"><span>9</span></div>
<span class="t c1">,</span><span class="t c2">COMMA</span><span class="t c3">U+002C</span><span class="t c4">13504</span>
</div>
<div class="a row alt" style="top:190px">
<div class="a vh"><span>10</span></div>
<span class="t c1">-</span><span class="t c2">HYPHEN-MINUS</span><span class="t c3">U+002D</span><span class="t c4">13724</span>
</div>
<div class="a row" style="top:209px">
<div class="a vh"><span>11</span></div>
<span class="t c1">.</span><span class="t c2">FULL STOP</span><span class="t c3">U+002E</span><span class="t c4">14762</span>
</div>
<div class="a row alt" style="top:228px">
<div class="a vh"><span>12</span></div>
<span class="t c1">/</span><span class="t c2">SOLIDUS</span><span class="t c3">U+002F</span><span class="t c4">8685</span>
</div>
<div class="a row" style="top:247px">
<div class="a vh"><span>13</span></div>
<span class="t c1">0</span><span class="t c2">DIGIT ZERO</span><span class="t c3">U+0030</span><span class="t c4">1058</span>
</div>
<div class="a row alt" style="top:266px">
<div class="a vh"><span>14</span></div>
<span class="t c1">1</span><span class="t c2">DIGIT ONE</span><span class="t c3">U+0031</span><span class="t c4">7843</span>
</div>
<div class="a row" style="top:285px">
<div class="a vh"><span>15</span></div>
<span class="t c1">2</span><span class="t c2">DIGIT TWO</span><span class="t c3">U+0032</span><span class="t c4">574</span>
</div>
<div class="a row alt" style="top:304px">
<div class="a vh"><span>16</span></div>
<span class="t c1">3</span><span class="t c2">DIGIT THREE</span><span class="t c3">U+0033</span><span class="t c4">580</span>
</div>
<div class="a row" style="top:323px">
<div class="a vh"><span>17</span></div>
<span class="t c1">4</span><span class="t c2">DIGIT FOUR</span><span class="t c3">U+0034</span><span class="t c4">1556</span>
</div>
<div class="a row alt" style="top:342px">
<div class="a vh"><span>18</span></div>
<span class="t c1">5</span><span class="t c2">DIGIT FIVE</span><span class="t c3">U+0035</span><span class="t c4">575</span>
</div>
<div class="a row" style="top:361px">
<div class="a vh"><span>19</span></div>
<span class="t c1">6</span><span class="t c2">DIGIT SIX</span><span class="t c3">U+0036</span><span class="t c4">667</span>
</div>
<div class="a row alt" style="top:380px">
<div class="a vh"><span>20</span></div>
<span class="t c1">7</span><span class="t c2">DIGIT SEVEN</span><span class="t c3">U+0037</span><span class="t c4">514</span>
</div>
<div class="a row" style="top:399px">
<div class="a vh"><span>21</span></div>
<span class="t c1">8</span><span class="t c2">DIGIT EIGHT</span><span class="t c3">U+0038</span><span class="t c4">775</span>
</div>
<div class="a row alt" style="top:418px">
<div class="a vh"><span>22</span></div>
<span class="t c1">9</span><span class="t c2">DIGIT NINE</span><span class="t c3">U+0039</span><span class="t c4">1338</span>
</div>
<div class="a" id="vsb"><div class="a" id="sbup"></div><div class="a" id="sbhandle"></div><div class="a" id="sbdn"></div><svg class="a" style="left:4px;top:5px" width="8" height="5"><path d="M0 5 L4 0 L8 5Z" fill="#404040"/></svg><svg class="a" style="left:4px;top:424px" width="8" height="5"><path d="M0 0 L4 5 L8 0Z" fill="#404040"/></svg></div>
</div>
<div class="a" id="chars"><span class="t">–’ !&quot;&amp;(),-./0123456789:;&lt;=&gt;?ABCDEFGHIJKLMNOPQRSTUVWXYZ_abcdefghijklmnopqrstuvwxyz ©«»ÄÍÖÜßä…éíñóõöüĆćĉč‹›ž</span></div>
<div class="btn" style="left:861px;border-color:#7aaee0;background:linear-gradient(#f4f8fc,#e4ecf4)"><span class="t" style="left:28px"><u>R</u>efresh</span></div>
<div class="btn" style="left:947px"><span class="t" style="left:32px"><u>S</u>ave</span></div>
<div class="btn" style="left:1033px"><span class="t" style="left:33px">Close</span></div>
<svg class="a" style="left:860px;top:690px" width="260" height="26" viewBox="860 690 260 26">
<defs>
<linearGradient id="gGrn" x1="0" y1="0" x2="0" y2="1"><stop offset="0" stop-color="#5ab85a"/><stop offset="1" stop-color="#10a010"/></linearGradient>
<radialGradient id="gRedB" cx="0.45" cy="0.35" r="0.7"><stop offset="0" stop-color="#e83030"/><stop offset="0.75" stop-color="#c00c0c"/><stop offset="1" stop-color="#900000"/></radialGradient>
</defs>
<path d="M885.2 699.5 A5.3 5.3 0 1 0 885.8 705.5" fill="none" stroke="url(#gGrn)" stroke-width="4.4"/>
<path d="M882 702.5 L888.8 702.5 L888.8 695.8 Z" fill="#2a9a2a"/>
<rect x="969.7" y="695.7" width="8.6" height="14.6" fill="#fff" stroke="#1a1a1a" stroke-width="1.5"/>
<path d="M977.5 696 Q977 700 972 701.5 Q970.5 702 970.5 704" fill="none" stroke="#1a1a1a" stroke-width="1.4"/>
<path d="M970.5 696.5 H975.5 Q974 699.5 970.5 700.5 Z" fill="#a8b8c8"/>
<circle cx="974" cy="705.5" r="1.3" fill="#1a1a1a"/>
<circle cx="1058.2" cy="702.6" r="7.3" fill="url(#gRedB)"/>
<path d="M1055 699.4 L1061.4 705.8 M1061.4 699.4 L1055 705.8" stroke="#fff" stroke-width="2"/>
</svg>

<svg class="a" style="left:0;top:236px" width="310" height="26" viewBox="0 236 310 26"><path d="M239 252.7 Q258 249.2 281 250.6 M281.6 242.7 Q285 248.5 305.5 255.3 Q300 258.5 271.4 257.8" fill="none" stroke="#1c1cc8" stroke-width="1.8" stroke-linecap="round"/></svg>

</body></html>
